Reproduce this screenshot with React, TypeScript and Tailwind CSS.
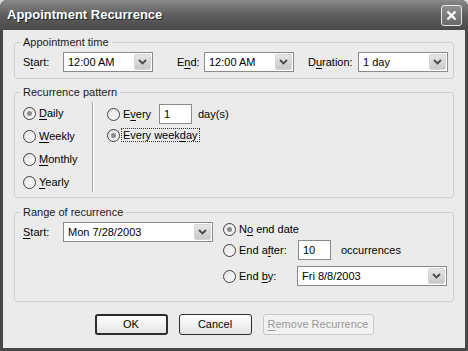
import React from "react";

function Mn({ text, at }: { text: string; at: number }) {
  return (
    <>
      {text.slice(0, at)}
      <span className="underline underline-offset-[2px]">{text[at]}</span>
      {text.slice(at + 1)}
    </>
  );
}

function Radio({ checked, children }: { checked?: boolean; children: React.ReactNode }) {
  return (
    <div className="flex items-center h-[14px]">
      <span className="w-[13px] h-[13px] rounded-full border border-[#3f3f3f] bg-gradient-to-br from-[#e2e2e2] to-white flex items-center justify-center shrink-0">
        {checked && <span className="w-[5px] h-[5px] rounded-full bg-[#8c8c8c]" />}
      </span>
      <span className="ml-[3px]">{children}</span>
    </div>
  );
}

function Chevron() {
  return (
    <span className="w-[17px] h-[16px] mr-[1px] rounded-[2px] bg-gradient-to-b from-[#e6e6e6] to-[#c9c9c9] border border-[#d6d6d6] flex items-center justify-center">
      <svg width="9" height="6" viewBox="0 0 9 6">
        <path d="M1 1 L4.5 4.5 L8 1" fill="none" stroke="#4a4a4a" strokeWidth="1.8" />
      </svg>
    </span>
  );
}

function Combo({ value, w }: { value: string; w: string }) {
  return (
    <div className={`${w} h-[20px] border border-[#8a8a8a] bg-white flex items-center justify-between pl-[4px]`}>
      <span>{value}</span>
      <Chevron />
    </div>
  );
}

function Input({ value, w }: { value: string; w: string }) {
  return (
    <div className={`${w} h-[20px] border border-[#8a8a8a] bg-white flex items-center pl-[4px]`}>{value}</div>
  );
}

function Group({ title, h, children }: { title: string; h: string; children: React.ReactNode }) {
  return (
    <fieldset className={`${h} border border-[#d0d0d0] rounded-[3px]`}>
      <legend className="ml-[5px] px-[3px] leading-[13px] text-[#1a1a1a]">{title}</legend>
      {children}
    </fieldset>
  );
}

export default function App() {
  return (
    <div className="w-[468px] h-[351px] bg-[#d8d8d8] font-['Liberation_Sans',Arial,sans-serif] text-[11px] text-black">
      <div className="h-full rounded-t-[7px] bg-[#474747] flex flex-col">
        <div className="h-[30px] shrink-0 rounded-t-[7px] bg-gradient-to-b from-[#8a8a8a] via-[#5e5e5e] to-[#4a4a4a] flex items-center justify-between pl-[7px] pr-[6px]">
          <span className="text-white font-bold text-[13px] [text-shadow:1px_1px_0_#222]">Appointment Recurrence</span>
          <span className="w-[21px] h-[21px] rounded-[3px] border border-[#e8e8e8] bg-gradient-to-b from-[#8f8f8f] to-[#6a6a6a] flex items-center justify-center">
            <svg width="11" height="11" viewBox="0 0 11 11">
              <path d="M1.5 1.5 L9.5 9.5 M9.5 1.5 L1.5 9.5" stroke="white" strokeWidth="2.4" />
            </svg>
          </span>
        </div>
        <div className="flex-1 mx-[3px] mb-[3px] bg-[#ebebeb] px-[11px] pt-[6px] flex flex-col">
          <Group title="Appointment time" h="h-[43px]">
            <div className="flex items-center pl-[8px] mt-[3px]">
              <span className="w-[40px]"><Mn text="Start:" at={1} /></span>
              <Combo value="12:00 AM" w="w-[90px]" />
              <span className="w-[27px] ml-[24px]"><Mn text="End:" at={1} /></span>
              <Combo value="12:00 AM" w="w-[90px]" />
              <span className="w-[50px] ml-[14px]"><Mn text="Duration:" at={1} /></span>
              <Combo value="1 day" w="w-[90px]" />
            </div>
          </Group>
          <div className="mt-[7px]">
            <Group title="Recurrence pattern" h="h-[112px]">
              <div className="flex pl-[8px] mt-[3px]">
                <div className="w-[69px] flex flex-col gap-[9px] pt-[4px]">
                  <Radio checked><Mn text="Daily" at={0} /></Radio>
                  <Radio><Mn text="Weekly" at={0} /></Radio>
                  <Radio><Mn text="Monthly" at={0} /></Radio>
                  <Radio><Mn text="Yearly" at={0} /></Radio>
                </div>
                <div className="w-[1px] h-[90px] bg-[#a8a8a8] border-r border-white box-content" />
                <div className="pl-[13px] flex flex-col">
                  <div className="flex items-center h-[20px] mt-[2px]">
                    <div className="w-[52px]"><Radio><Mn text="Every" at={1} /></Radio></div>
                    <Input value="1" w="w-[33px]" />
                    <span className="ml-[6px]">day(s)</span>
                  </div>
                  <div className="flex items-center h-[14px] mt-[4px]">
                    <span className="w-[13px] h-[13px] rounded-full border border-[#3f3f3f] bg-gradient-to-br from-[#e2e2e2] to-white flex items-center justify-center shrink-0">
                      <span className="w-[5px] h-[5px] rounded-full bg-[#8c8c8c]" />
                    </span>
                    <span className="ml-[1px] px-[1px] border border-dotted border-[#333] leading-[12px]">
                      <Mn text="Every weekday" at={10} />
                    </span>
                  </div>
                </div>
              </div>
            </Group>
          </div>
          <div className="mt-[8px]">
            <Group title="Range of recurrence" h="h-[96px]">
              <div className="flex pl-[8px] mt-[3px]">
                <div className="flex items-start">
                  <span className="w-[40px] h-[20px] flex items-center"><Mn text="Start:" at={0} /></span>
                  <Combo value="Mon 7/28/2003" w="w-[150px]" />
                </div>
                <div className="ml-[10px] flex flex-col">
                  <div className="h-[14px]"><Radio checked><Mn text="No end date" at={1} /></Radio></div>
                  <div className="flex items-center h-[20px] mt-[4px]">
                    <div className="w-[75px]"><Radio><Mn text="End after:" at={5} /></Radio></div>
                    <Input value="10" w="w-[33px]" />
                    <span className="ml-[10px]">occurrences</span>
                  </div>
                  <div className="flex items-center h-[20px] mt-[6px]">
                    <div className="w-[74px]"><Radio><Mn text="End by:" at={4} /></Radio></div>
                    <Combo value="Fri 8/8/2003" w="w-[150px]" />
                  </div>
                </div>
              </div>
            </Group>
          </div>
          <div className="flex justify-center gap-[11px] mt-[12px]">
            <button className="w-[73px] h-[21px] rounded-[3px] border-2 border-[#2e2e2e] bg-gradient-to-b from-white to-[#e4e4e4]">OK</button>
            <button className="w-[73px] h-[21px] rounded-[3px] border border-[#2e2e2e] bg-gradient-to-b from-white to-[#e4e4e4]">Cancel</button>
            <button className="w-[111px] h-[21px] rounded-[3px] border border-[#c8c8c8] bg-[#f2f2f2] text-[#9a9a9a]"><Mn text="Remove Recurrence" at={0} /></button>
          </div>
        </div>
      </div>
    </div>
  );
}
